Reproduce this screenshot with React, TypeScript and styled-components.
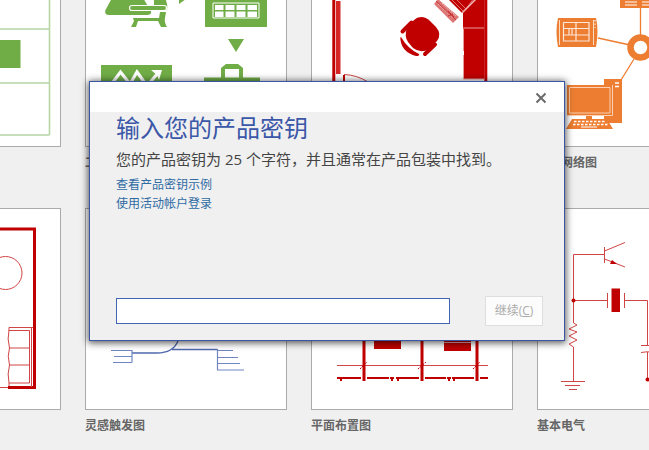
import React from 'react';
import styled, { createGlobalStyle } from 'styled-components';

const GlobalStyle = createGlobalStyle`
  *, *::before, *::after { box-sizing: border-box; }
  html, body { margin: 0; height: 100%; background: #f0f0f0; }
  #root { height: 100%; }
  body, button, input {
    font-family: "Open Sans", "Noto Sans CJK SC", sans-serif;
  }
`;

const green = '#70ad47';
const red = '#c00000';
const orange = '#ed7d31';
const thinRed = '#d04545';
const paleGreen = '#b7d6a3';

const Screen = styled.div`
  position: relative;
  height: 100%;
  min-height: 450px;
  overflow: hidden;
`;

const Gallery = styled.main`
  display: grid;
  grid-template-columns: repeat(4, 202px);
  column-gap: 24px;
  row-gap: 30px;
  margin: -55px 0 0 -141px;
`;

const Template = styled.figure`
  margin: 0;
`;

const Preview = styled.div`
  height: 202px;
  border: 1px solid #ababab;
  background: #fff;
`;

const Drawing = styled.svg`
  display: block;
  width: 100%;
  height: 100%;
`;

const TemplateName = styled.figcaption`
  height: 31px;
  padding-top: 7px;
  font-size: 12px;
  line-height: 18px;
  font-weight: 700;
  color: #666;
`;

const Overlay = styled.div`
  position: absolute;
  inset: 0;
  display: flex;
  align-items: flex-start;
  padding: 81px 84px 0 89px;
`;

const Dialog = styled.section`
  flex: 1;
  border: 1px solid #3955a3;
  background: #f0f0f0;
  box-shadow: 0 1px 7px 1px rgba(0, 0, 0, 0.65);
`;

const TitleBar = styled.header`
  display: flex;
  justify-content: flex-end;
  align-items: center;
  height: 30px;
  padding-right: 12px;
  background: #fff;
`;

const CloseButton = styled.button`
  display: grid;
  place-items: center;
  width: 22px;
  height: 22px;
  margin-top: 2px;
  padding: 0;
  border: 0;
  background: transparent;
`;

const Content = styled.div`
  display: flex;
  flex-direction: column;
  align-items: flex-start;
  padding: 0 21px 14px 26px;
`;

const Title = styled.h1`
  margin: 0;
  font-size: 24px;
  line-height: 32px;
  font-weight: 400;
  color: #3b57a8;
`;

const Message = styled.p`
  margin: 4px 0 5px;
  font-size: 15px;
  line-height: 22px;
  color: #444;
`;

const TextLink = styled.a`
  font-size: 12px;
  line-height: 19px;
  color: #2f6ba3;
  text-decoration: none;
`;

const KeyForm = styled.form`
  display: flex;
  align-items: center;
  align-self: stretch;
  gap: 35px;
  margin-top: 83px;
`;

const KeyInput = styled.input`
  flex: 1;
  min-width: 0;
  height: 26px;
  padding: 0 6px;
  border: 1px solid #3f64b0;
  background: #fff;
  font-size: 14px;
  outline: none;
`;

const ContinueButton = styled.button`
  width: 58px;
  height: 30px;
  padding: 0 0 2px;
  border: 1px solid #dedede;
  background: #fcfcfc;
  font-size: 12px;
  color: #ababab;
  white-space: nowrap;
`;

type TileProps = { x: number; y: number; name?: string; children?: React.ReactNode };

function Tile({ x, y, name, children }: TileProps) {
  return (
    <Template>
      <Preview>
        <Drawing viewBox={`${x} ${y} 200 200`} fill="none" aria-hidden="true">
          {children}
        </Drawing>
      </Preview>
      <TemplateName>{name}</TemplateName>
    </Template>
  );
}

function Sheet() {
  return (
    <>
      <path d="M-130 29H49M-130 83H49M-130 135H49.500M49.500-40V135" stroke={paleGreen} strokeWidth="1.600" />
      <path d="M-40 40H20.500V68H-40Z" fill={green} />
    </>
  );
}

function Workflow() {
  return (
    <>
      <path d="M112-2H143L151 11Q152 15 147 15H109Q104 15 105.500 10Z" fill={green} />
      <path d="M154-2H165Q168 4 167 10H154Z" fill={green} />
      <rect x="129.500" y="5.500" width="37" height="5" rx="2.500" fill={green} stroke="#fff" strokeWidth="1.200" />
      <path d="M133 18H159L160 12H166L165 18Q164 22 167 27H161L158 21H138L136 27H131L134 21Z" fill={green} />
      <path d="M179-4L186-1L179 4ZM205-10H267V27H205ZM228 39H244L236 52ZM101 65H172V90H101Z" fill={green} />
      <path d="M213 3H259V18H213Z" stroke="#fff" />
      <path d="M215 5H223.500V10H215ZM225.500 5H234.500V10H225.500ZM236.500 5H245.500V10H236.500ZM247.500 5H257V10H247.500ZM215 11.500H223.500V17H215ZM225.500 11.500H234.500V17H225.500ZM236.500 11.500H245.500V17H236.500ZM247.500 11.500H257V17H247.500Z" fill="#fff" />
      <path d="M110 86L120.500 72L130 84L137 72L147 86L158 73" stroke="#fff" strokeWidth="3.200" />
      <path d="M151 70H162L159 80L157 75Z" fill="#fff" />
      <path d="M223 80V69M241 69V80" stroke={green} strokeWidth="4" />
      <path d="M221 68L226 64H238L243 68V69H221Z" fill={green} />
      <path d="M204 77.500H260V90H204Z" fill={green} />
    </>
  );
}

function Office() {
  return (
    <>
      <path d="M333.800-40V90M485.800-40V90" stroke={red} strokeWidth="3" />
      <path d="M336 1H340.500V74H336Z" fill="#d52525" />
      <path d="M344 90V75" stroke={red} strokeWidth="2" />
      <path d="M344 74.500Q357 75 368 82" stroke={thinRed} />
      <path d="M463-10H484.500V79H463Z" fill={red} />
      <path d="M463 28H484M463.500 29V79H484.500" stroke="#e99a9a" />
      <path d="M463 51V55" stroke="#fff" strokeWidth="2" />
      <path d="M448-1L450-10H482L476-2L462 13Z" fill={red} />
      <path d="M455-2L466 9L474-2M451-1L463 11" stroke="#df7070" />
      <path d="M462 13L479-4" stroke="#f3b5b5" strokeWidth="1.500" />
      <path d="M438-1L459 17L453 23L434 4Z" fill="#dd7777" />
      <path d="M438 4L453 18M442 3L456 16" stroke="#f0bcbc" strokeDasharray="2 1" />
      <path d="M448 11L454 17M448 16L453 14M436 1L456 20" stroke="#c83030" />
      <path d="M421 17Q426 17 430 21L436 27Q442 34 437 41L429 49Q421 54 413 48L408 42Q404 36 407 28L414 20Q417 17 421 17Z" fill={red} />
      <path d="M402.500 31.500L411.500 22.500M425 54L435 44.500" stroke={red} strokeWidth="4" strokeLinecap="round" />
      <path d="M401 37Q408 49 419 54Q420 56 416 56Q402 52 400.500 40Q400 37 401 37Z" fill={red} />
    </>
  );
}

function Network() {
  return (
    <>
      <path d="M598 38L630 45M640.500 8V36M634 59L621 80" stroke={orange} strokeWidth="1.300" />
      <circle cx="640.500" cy="47.500" r="10" stroke={orange} strokeWidth="6.500" />
      <path d="M620-6H660V8H620Z" fill={orange} />
      <path d="M625 2H637M642 2H655M625 5H637M642 5H655" stroke="#fff" />
      <path d="M558 18H596Q599 31 596 47H558Q555 31 558 18Z" fill={orange} />
      <path d="M559.500 20V45M593.500 20V45" stroke="#fbdac2" />
      <path d="M563.500 22.500H589V41H563.500ZM563 28.500H589M563 35H589M576 22V41M569 28V35M572 28V35" stroke="#fde7d8" strokeWidth="1.200" />
      <path d="M595 20V28" stroke="#fff" strokeDasharray="1.500 2" />
      <path d="M604 79H622V123H604ZM567 85H612V115H567ZM586 115H592V120H586Z" fill={orange} />
      <path d="M569.500 87.500H610V113H569.500Z" stroke="#fbd0b3" />
      <path d="M567 115.500H612.500V85" stroke="#fbd0b3" />
      <path d="M615 83H619M615 86.500H619" stroke="#fff" strokeWidth="1.500" />
      <path d="M572 119H607L613 129H566Z" fill={orange} />
      <path d="M574 121.500H606M573 124.500H608" stroke="#fff" strokeWidth="1.600" strokeDasharray="2.500 1.500" />
      <path d="M581 127H597" stroke="#fff" />
    </>
  );
}

function Room() {
  return (
    <>
      <path d="M-100 229H34.500V387.500H8" stroke={red} strokeWidth="3" />
      <path d="M-100 387.500H8" stroke={thinRed} />
      <circle cx="5.500" cy="273" r="16.500" stroke={thinRed} />
      <path d="M33 327.500H9V330.500H29.500V383H9V386M31.500 328V387M9 330Q7 339 9.500 348H30M9.500 348Q7 356 9.500 365H30M9.500 365Q7 374 9 383" stroke={thinRed} />
    </>
  );
}

function MindMap() {
  return (
    <>
      <path d="M178 341Q173 353 157 353H132M172 349.500H217.500" stroke="#5069ae" strokeWidth="1.300" />
      <path d="M111 350.500H132V362.500M114 356.500H132M113 362.500H132M217.500 349V370M217 350.500H233M217 357.500H238M217 363.500H240M217 370H244" stroke="#6f86c2" strokeWidth="1.200" />
    </>
  );
}

function FloorPlan() {
  return (
    <>
      <path d="M337 365.500H488" stroke={thinRed} />
      <path d="M337 378H488" stroke={red} strokeWidth="2" />
      <path d="M341 377V381M392 377V381M398 377V381M449 377V381M454 377V381" stroke={red} strokeWidth="2" />
      <path d="M361 378H367M419 378H425M474 378H480M389 378H390M394 378H396M446 378H447M451 378H452" stroke="#fff" strokeWidth="3" />
      <path d="M364 335V381M422 335V381M477 335V381" stroke={red} strokeWidth="3" />
      <path d="M360 369L367 362M418 369L426 362M473 369L480 362" stroke={red} strokeDasharray="2 1" />
      <path d="M374 335H401V349H374ZM444 335H471V351H444Z" fill={red} />
      <path d="M444 342.500H471" stroke="#efabab" />
    </>
  );
}

function Circuit() {
  return (
    <>
      <path d="M604.500 247V263M604.500 254.500H573.500V323L577 325L569 329L577 332L569 336L577 340L569 344L573.500 347V381M604.500 251L625 242.500M604.500 259L625 267M573 300.500H607.500M607.500 293V308M624.500 293V308M624.500 300.500H647.500V345M641 345.500H654M641 352.500Q647 351 654 352.500M647.500 352V380M561 381.500H585M565 385.500H580M569 389.500H577" stroke={thinRed} />
      <path d="M611.500 288.500H620V312H611.500ZM612 260L617 264L610 264Z" fill={red} />
      <circle cx="573.500" cy="300.500" r="2" fill={red} />
      <circle cx="647.500" cy="379.500" r="2" fill={red} />
    </>
  );
}

export default function App() {
  return (
    <>
      <GlobalStyle />
      <Screen>
        <Gallery>
          <Tile x={-140} y={-54}><Sheet /></Tile>
          <Tile x={86} y={-54} name="工作流程图"><Workflow /></Tile>
          <Tile x={312} y={-54}><Office /></Tile>
          <Tile x={538} y={-54} name="基本网络图"><Network /></Tile>
          <Tile x={-140} y={209}><Room /></Tile>
          <Tile x={86} y={209} name="灵感触发图"><MindMap /></Tile>
          <Tile x={312} y={209} name="平面布置图"><FloorPlan /></Tile>
          <Tile x={538} y={209} name="基本电气"><Circuit /></Tile>
        </Gallery>
        <Overlay>
          <Dialog role="dialog" aria-labelledby="dialog-title">
            <TitleBar>
              <CloseButton type="button" aria-label="关闭">
                <svg width="12" height="12" viewBox="0 0 12 12" aria-hidden="true">
                  <path d="M1.500 1.500L10.500 10.500M10.500 1.500L1.500 10.500" stroke="#6a6a6a" strokeWidth="2" />
                </svg>
              </CloseButton>
            </TitleBar>
            <Content>
              <Title id="dialog-title">输入您的产品密钥</Title>
              <Message id="key-message">您的产品密钥为 25 个字符，并且通常在产品包装中找到。</Message>
              <TextLink href="#example">查看产品密钥示例</TextLink>
              <TextLink href="#sign-in">使用活动帐户登录</TextLink>
              <KeyForm onSubmit={(e) => e.preventDefault()}>
                <KeyInput type="text" aria-labelledby="dialog-title" aria-describedby="key-message" />
                <ContinueButton type="submit" disabled>继续(<u>C</u>)</ContinueButton>
              </KeyForm>
            </Content>
          </Dialog>
        </Overlay>
      </Screen>
    </>
  );
}
